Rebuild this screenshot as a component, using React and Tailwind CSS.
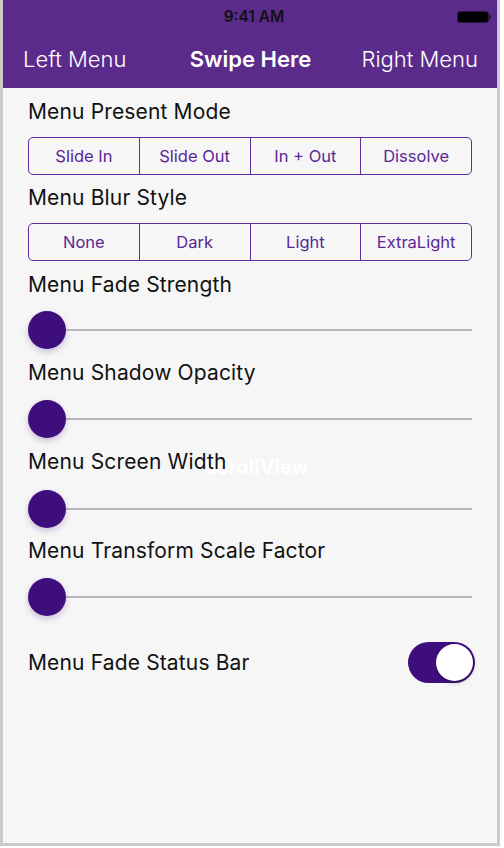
import React from "react";

const font = { fontFamily: "Inter, 'Helvetica Neue', Arial, sans-serif" };

function Segmented({ items }) {
  return (
    <div className="flex h-[38px] rounded-[5px] border border-[#5f2d9c] overflow-hidden">
      {items.map((t, i) => (
        <div
          key={t}
          className={`flex-1 flex items-center justify-center text-[16.5px] text-[#5a2696] ${i > 0 ? "border-l border-[#5f2d9c]" : ""}`}
        >
          {t}
        </div>
      ))}
    </div>
  );
}

function Slider() {
  return (
    <div className="relative h-[38px] flex items-center">
      <div className="w-[38px] h-[38px] rounded-full bg-[#3f0e7d] shadow-[0_3px_6px_rgba(80,40,140,0.25)] shrink-0 z-10" />
      <div className="flex-1 h-[2px] bg-[#b9b9b9]" />
    </div>
  );
}

function Label({ children, className = "" }) {
  return (
    <div className={`text-[21px] leading-[24px] tracking-[0.15px] text-[#111] ${className}`}>{children}</div>
  );
}

export default function App() {
  return (
    <div className="w-[504px] h-[848px] bg-white" style={font}>
      <div className="w-[500px] h-[846px] flex flex-col border-l-[3px] border-r-[3px] border-b-[3px] border-[#cacaca] bg-[#f6f6f6]">
        <div className="bg-[#5b2b8c] h-[88px] flex flex-col">
          <div className="h-[33px] relative flex items-center justify-center">
            <span className="text-[15.5px] font-semibold text-[#111] ml-[8px]">9:41 AM</span>
            <div className="absolute left-[454px] top-[11px] flex items-center">
              <div className="w-[32px] h-[12px] rounded-[3px] border border-[#2a1640] bg-black" />
              <div className="w-[2px] h-[4px] bg-[#2a1640] rounded-r-[1px]" />
            </div>
          </div>
          <div className="flex-1 flex items-center pl-[20px] pr-[19px] pb-[2px] text-white">
            <span className="flex-1 text-[22px] font-light">Left Menu</span>
            <span className="text-[22px] font-semibold">Swipe Here</span>
            <span className="flex-1 text-right text-[22px] font-light">Right Menu</span>
          </div>
        </div>
        <div className="flex flex-col pl-[25px] pr-[25px] pt-[12px]">
          <Label>Menu Present Mode</Label>
          <div className="mt-[13px]">
            <Segmented items={["Slide In", "Slide Out", "In + Out", "Dissolve"]} />
          </div>
          <Label className="mt-[11px]">Menu Blur Style</Label>
          <div className="mt-[13px]">
            <Segmented items={["None", "Dark", "Light", "ExtraLight"]} />
          </div>
          <Label className="mt-[12px]">Menu Fade Strength</Label>
          <div className="mt-[14px]"><Slider /></div>
          <Label className="mt-[12px]">Menu Shadow Opacity</Label>
          <div className="mt-[15px]"><Slider /></div>
          <div className="relative mt-[12px]">
            <div className="absolute left-[176px] top-[5px] text-[20px] leading-[24px] font-bold text-white">ScrollView</div>
            <Label className="relative">Menu Screen Width</Label>
          </div>
          <div className="mt-[16px]"><Slider /></div>
          <Label className="mt-[11px]">Menu Transform Scale Factor</Label>
          <div className="mt-[15px]"><Slider /></div>
          <div className="mt-[26px] flex items-center justify-between">
            <Label>Menu Fade Status Bar</Label>
            <div className="w-[67px] h-[41px] rounded-full bg-[#3f0e7d] flex items-center justify-end pr-[2px] mr-[-3px]">
              <div className="w-[37px] h-[37px] rounded-full bg-white shadow-[0_2px_4px_rgba(0,0,0,0.25)]" />
            </div>
          </div>
        </div>
      </div>
    </div>
  );
}
